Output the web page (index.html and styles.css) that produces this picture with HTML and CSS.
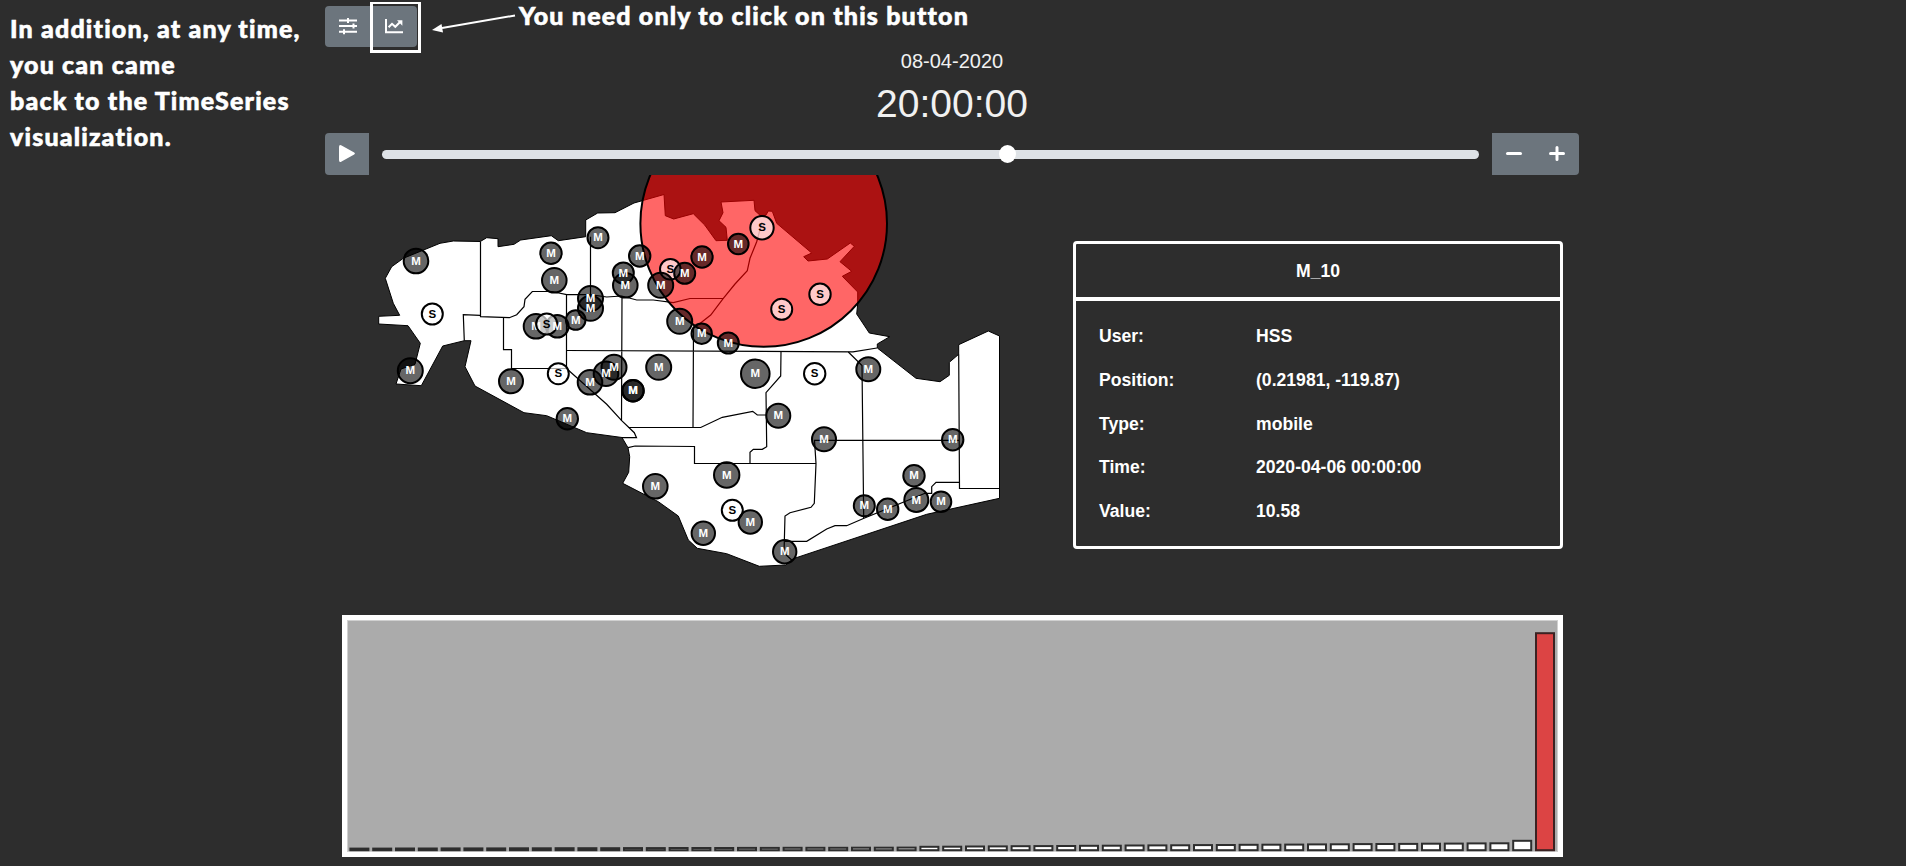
FILE: index.html
```html
<!DOCTYPE html>
<html lang="en">
<head>
<meta charset="utf-8">
<title>Map visualization</title>
<link rel="stylesheet" href="styles.css">
</head>
<body>
<aside class="note note-side">
  <div>In addition, at any time,</div>
  <div>you can came</div>
  <div>back to the TimeSeries</div>
  <div>visualization.</div>
</aside>
<main class="app">
  <div class="toolbar">
    <button class="btn btn-left" aria-label="Settings">
      <svg width="46" height="41" viewBox="325 6 46 41"><path class="icon" d="M339 20.5h18M339 26h18M339 31.700h18"/><path class="icon" d="M348 18v5M353.500 23.500v5M344 29.200v5"/></svg>
    </button>
    <button class="btn btn-right" aria-label="Time series">
      <svg width="46" height="41" viewBox="371 6 46 41"><path class="icon" d="M386 19v13.200h17"/><path class="icon" d="M388.600 27.200l3.400-3.400 3.300 3 5-5"/><path class="icon-fill" d="M397 20.300h5.400v5.400z"/></svg>
    </button>
  </div>
  <div class="date">08-04-2020</div>
  <div class="time">20:00:00</div>
  <div class="player">
    <button class="btn play" aria-label="Play"><svg width="44" height="42" viewBox="325 133 44 42"><path class="icon-fill" d="M339 147q0-3 2.600-1.600l12.600 7q1.600 1.100 0 2.200l-12.600 7q-2.600 1.500-2.600-1.500z"/></svg></button>
    <div class="track"><span class="thumb"></span></div>
    <div class="steps">
      <button class="btn" aria-label="Minus"><svg width="44" height="42" viewBox="1492 133 44 42"><path class="icon thick" d="M1507.500 153.500h13"/></svg></button>
      <button class="btn" aria-label="Plus"><svg width="43" height="42" viewBox="1536 133 43 42"><path class="icon thick" d="M1550.500 153.500h13M1557 147.500v12"/></svg></button>
    </div>
  </div>
  <div class="middle">
    <svg class="map" width="700" height="440" viewBox="325 175 700 440">
      <path class="land" d="M385.300 278.300L391.700 266.700 403.300 258.300 440 243.300 453.300 241 480.300 241.500 486.700 237.700 498 238.700V246.700L514 244.300 520.700 240 551.300 235.700 558.300 240.700 585.700 236.700V220L597.700 213 615 212.700 634 203 664 194.500 665.300 215.700 673.700 219 693.300 213.700 704.700 225 716 240.700 727.300 240.300 726 227.300 719 220.700 723 212.700 721 202 754 200.300 755 210.700 761.700 216.700 766 215 768.300 211 772.300 211.300 776.700 223.300 811.700 253 803.700 256.700 808 261 827.300 259 850.300 243 854.300 246.300 840 261.700 851.700 271.300 842.300 276.300 857.700 292V304L856.700 314 869.300 333 889.700 336.700 877.300 344V348L916 378.300 940 381.700 949.300 375.300V362.300L958.700 354.300V344.700L988.300 331 999.500 336V498.300L926.700 514.300 793.300 558.700 785.700 565 759.300 566.300 726.700 553.700 697.300 548.300 688.300 540 678.300 516 658.300 501.700 622.700 483.300 628.700 472.300 629.700 456.700 628 447.700 622 437.500 586.700 432.700 546.700 415.700 524 412.700 475 386 465 366.700 471 340.700H464.300L442.700 346 421.300 385.700 396 384 401 369 415 364.300 420.300 343.300 408 325.700 378.700 324V316.300L399.700 315.300 393.300 303.300Z"/>
      <g class="borders">
        <path d="M480.500 241.500V316.700L509.300 317.700 516.700 314.700 524 306.700 525 299.300 532.300 291.500H551.700L566.700 294.700H590L606.700 297 621.700 296 636.700 300H653.300L673.300 302.700 690 298.500H723.300"/>
        <path d="M464.300 340.700L463.300 314.700 480.300 315.300M503.500 318V349.700H511.500V368.500H566.500V294.700M566.500 368.500L606.700 404.300 621.700 420.700 634.300 432.700 636.500 437.700H622"/>
        <path d="M590.500 236.700V294.500M622 296L621.500 420.700M566.700 350.500L853 351.800 877 348M628.500 427.500H700.700L722.300 417.300 752.700 411.300 757.300 415H766M693.500 328L693 427.500"/>
        <path d="M762 222L756.700 241.700 750 258.300 747.300 270.700 735 284 723.300 298.300 710.700 315 699.300 324 693.500 328"/>
        <path d="M781 351.700L780.700 376 766 392.700 766.700 446.700 762.300 449.300H753.300L750 452.300V463M848.300 352L862 365.500 863.700 518M628 447.700L635 446 694.500 446.500V463.500H816M959.300 440.300H814.500L816 463.500 814.300 503.300 811 507.300 790 512.700 785 516 784 553 791.700 560M958.700 354.300L959.500 488.500H999.500"/>
        <path d="M959.300 482.300H936L931.700 486.700V493.300H925L864 518.300 846.700 525.700H835L826.700 529 806.700 541.300H785"/>
      </g>
      <circle class="range" cx="763.7" cy="223.500" r="123.300"/>
      <g id="markers"></g>
      <g id="labels"></g>
    </svg>
    <section class="card">
      <h2 class="card-title">M_10</h2>
      <dl class="facts">
        <dt>User:</dt><dd>HSS</dd>
        <dt>Position:</dt><dd>(0.21981, -119.87)</dd>
        <dt>Type:</dt><dd>mobile</dd>
        <dt>Time:</dt><dd>2020-04-06 00:00:00</dd>
        <dt>Value:</dt><dd>10.58</dd>
      </dl>
    </section>
  </div>
  <svg class="chart" width="1211" height="232" viewBox="347 620 1211 232"><g id="bars"></g></svg>
</main>
<div class="highlight"></div>
<svg class="arrow" width="90" height="24" viewBox="430 12 90 24"><path d="M442 28L515 15.500" stroke="#fff" stroke-width="2"/><path d="M432 30l9.500-6 1.500 8.500z" fill="#fff"/></svg>
<div class="note note-top">You need only to click on this button</div>
<script src="script.js"></script>
</body>
</html>
```
FILE: styles.css
```css
* { box-sizing: border-box; }
body {
  margin: 0;
  height: 866px;
  position: relative;
  overflow: hidden;
  background: #2d2d2d;
  color: #fff;
  font-family: "Liberation Sans", Arial, sans-serif;
}
.app { width: 1254px; margin-left: 325px; padding-top: 6px; }
.toolbar { display: flex; height: 41px; }
.btn {
  display: flex;
  padding: 0;
  border: 0;
  background: #6c757d;
}
.btn-left { border-radius: 4px 0 0 4px; }
.btn-right { border-radius: 0 4px 4px 0; }
.icon { fill: none; stroke: #fff; stroke-width: 2; }
.thick { stroke-width: 3; stroke-linecap: round; }
.icon-fill { fill: #fff; }
.date, .time { text-align: center; color: #f1f1f1; }
.date { height: 28px; line-height: 28px; font-size: 20px; }
.time { height: 58px; line-height: 58px; font-size: 39px; }
.player { display: flex; align-items: center; height: 42px; }
.play { border-radius: 4px 0 0 4px; }
.track {
  position: relative;
  flex: 1;
  height: 9px;
  margin: 1px 13px 0;
  border-radius: 5px;
  background: #dee2e6;
}
.thumb {
  position: absolute;
  left: 617px;
  top: -5px;
  width: 17px;
  height: 18px;
  border-radius: 50%;
  background: #fff;
}
.steps { display: flex; border-radius: 0 4px 4px 0; overflow: hidden; }
.middle { display: flex; height: 440px; }
.map { flex: none; }
.land { fill: #fff; stroke: #000; stroke-width: 1; }
.borders path { fill: none; stroke: #000; stroke-width: 1.2; }
.range { fill: rgba(255, 0, 0, .6); stroke: #000; stroke-width: 2; }
.marker { stroke: #000; stroke-width: 2; }
.mobile { fill: rgba(0, 0, 0, .6); }
.static { fill: rgba(255, 255, 255, .65); }
.label { font-size: 11.5px; font-weight: bold; text-anchor: middle; fill: #fff; }
.label-static { fill: #000; }
.card {
  width: 490px;
  height: 308px;
  margin: 66px 0 0 48px;
  border: 3px solid #fff;
  border-radius: 4px;
  font-size: 17.6px;
  font-weight: bold;
}
.card-title {
  height: 57px;
  margin: 0;
  border-bottom: 4px solid #fff;
  font-size: 17.6px;
  line-height: 55px;
  text-align: center;
}
.facts {
  display: grid;
  grid-template-columns: 157px 1fr;
  grid-auto-rows: 43.75px;
  margin: 0;
  padding: 14px 23px;
  line-height: 43.75px;
}
.facts dd { margin: 0; }
.chart {
  display: block;
  box-sizing: content-box;
  margin-left: 17px;
  border: 5px solid #fff;
  background: #ababab;
  box-shadow: inset 0 0 0 1px #d0d0d0;
}
.bar { fill: #fff; stroke: #2d2d2d; stroke-width: 2; }
.bar-current { fill: #dc4444; stroke: #3b2222; }
.note {
  position: absolute;
  font-family: Lato, sans-serif;
  font-size: 25px;
  font-weight: 900;
  line-height: 36px;
  letter-spacing: 1.17px;
  white-space: nowrap;
  -webkit-text-stroke: .6px #fff;
}
.note-side { left: 10px; top: 10px; }
.note-top { left: 519px; top: -3px; }
.highlight {
  position: absolute;
  left: 370px;
  top: 2px;
  width: 51px;
  height: 51px;
  border: 3px solid #fff;
  border-top-width: 2px;
}
.arrow { position: absolute; left: 430px; top: 12px; }
```
FILE: script.js
```js
const NS = 'http://www.w3.org/2000/svg';
function add(parent, tag, attrs, text) {
  const el = document.createElementNS(NS, tag);
  for (const key in attrs) el.setAttribute(key, attrs[key]);
  if (text) el.textContent = text;
  parent.appendChild(el);
}

// Each sensor: type, x, y, radius, and whether its label stays under later markers
const sensors = [
  ['M', 416, 261, 12.3], ['S', 432.3, 314, 10.5], ['M', 410.3, 370.7, 12.5], ['M', 551, 253.3, 10.7],
  ['M', 554.3, 280.3, 12.3], ['M', 598, 237.7, 10.5], ['M', 639.7, 256, 10.7], ['M', 623.3, 273, 10.5],
  ['M', 625.3, 285.3, 12.3], ['S', 670.3, 269.3, 10.3], ['M', 660.7, 285.3, 12.5], ['M', 684.7, 273.3, 10.5],
  ['M', 590.5, 298.5, 12.5], ['M', 590.5, 308.3, 12.5], ['M', 575.7, 320, 9.8], ['M', 536, 326.3, 12.3, true],
  ['M', 557.3, 326.3, 11.3], ['S', 546.7, 324, 10.5], ['M', 679.7, 321.3, 12.5], ['M', 606, 373.7, 12.3],
  ['M', 614, 367.3, 12.5], ['M', 590, 382.3, 12.3], ['M', 658.7, 367.3, 12.5], ['M', 633, 390.7, 10.7],
  ['M', 633, 390.7, 10.7], ['S', 558.3, 373.7, 10.5], ['M', 511, 381.3, 12], ['M', 567.3, 418.7, 10.7],
  ['M', 702, 257, 10.7], ['M', 738.3, 244, 10.3], ['S', 762, 227.7, 11.7], ['S', 781.7, 309.3, 10.5],
  ['S', 820, 294.3, 10.7], ['M', 701.7, 333.7, 10.2], ['M', 728.3, 343, 10.5], ['M', 755.3, 373.7, 14.3],
  ['S', 814.7, 373.7, 10.7], ['M', 868.3, 369.3, 12], ['M', 778.3, 415.7, 12], ['M', 824, 439.3, 12],
  ['M', 952.7, 439.7, 10.7], ['M', 914, 475.7, 10.7], ['M', 916.3, 500, 12], ['M', 941, 501.7, 10.3],
  ['M', 864.3, 505.7, 10.5], ['M', 887.7, 509.3, 10.7], ['M', 726.7, 475, 12.7], ['M', 655.3, 486.3, 12.3],
  ['S', 732.3, 510.3, 10.5], ['M', 750.3, 522, 11.7], ['M', 703.3, 533.3, 11.7], ['M', 784.7, 551.7, 11.7]
];
const markers = document.getElementById('markers');
const labels = document.getElementById('labels');
for (const [type, x, y, r, under] of sensors) {
  const mobile = type === 'M';
  add(markers, 'circle', { class: 'marker ' + (mobile ? 'mobile' : 'static'), cx: x, cy: y, r: r });
  add(under ? markers : labels, 'text', { class: mobile ? 'label' : 'label label-static', x: x, y: y + 3.6 }, type);
}

// Sorted bars: 53 values, the last one is the selected sensor
const bars = document.getElementById('bars');
for (let i = 0; i < 53; i++) {
  let h = i < 25 ? 1.6 + i * 0.04 : 3.4 + (i - 25) * 0.14;
  if (i === 51) h = 9.4;
  if (i === 52) h = 217;
  add(bars, 'rect', {
    class: i === 52 ? 'bar bar-current' : 'bar',
    x: (350.4 + i * 22.8).toFixed(1), y: (850.2 - h).toFixed(1), width: 18, height: h.toFixed(1)
  });
}
```
